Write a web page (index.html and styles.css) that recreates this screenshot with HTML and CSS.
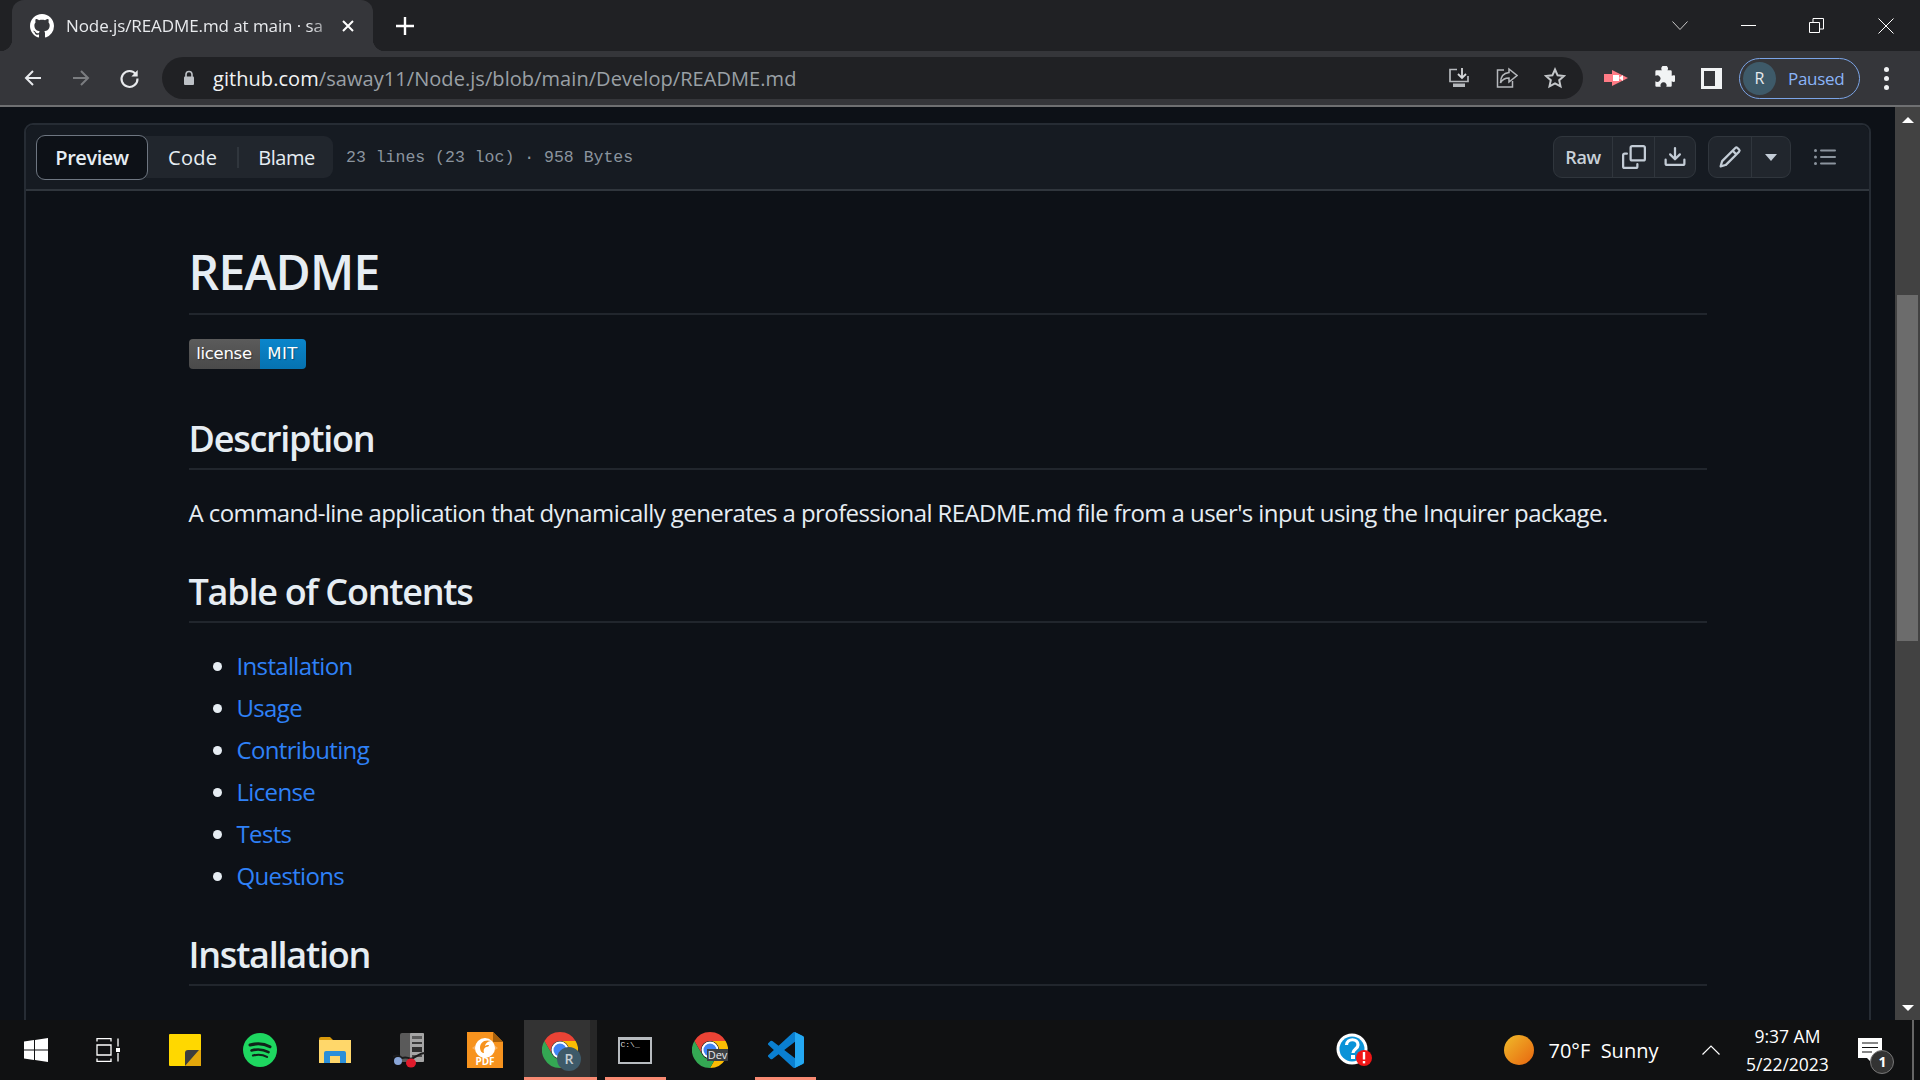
FILE: index.html
```html
<!DOCTYPE html>
<html lang="en">
<head>
  <meta charset="UTF-8" />
  <title>Node.js/README.md at main</title>
  <link rel="stylesheet" href="styles.css">
</head>
<body>

<div class="tabstrip">
  <div class="tab">
    <svg class="tab-logo" viewBox="0 0 16 16"><path fill="#fff" d="M8 0C3.58 0 0 3.58 0 8c0 3.54 2.29 6.53 5.47 7.59.4.07.55-.17.55-.38 0-.19-.01-.82-.01-1.49-2.01.37-2.53-.49-2.69-.94-.09-.23-.48-.94-.82-1.13-.28-.15-.68-.52-.01-.53.63-.01 1.08.58 1.23.82.72 1.21 1.87.87 2.33.66.07-.52.28-.87.51-1.07-1.78-.2-3.64-.89-3.64-3.95 0-.87.31-1.59.82-2.15-.08-.2-.36-1.02.08-2.12 0 0 .67-.21 2.2.82.64-.18 1.32-.27 2-.27s1.36.09 2 .27c1.53-1.04 2.2-.82 2.2-.82.44 1.1.16 1.92.08 2.12.51.56.82 1.27.82 2.15 0 3.07-1.87 3.75-3.65 3.95.29.25.54.73.54 1.48 0 1.07-.01 1.93-.01 2.2 0 .21.15.46.55.38A8.01 8.01 0 0 0 16 8c0-4.42-3.58-8-8-8z"/></svg>
    <span class="tab-title">Node.js/README.md at main · sa</span>
    <svg class="tab-close" viewBox="0 0 12 12"><path d="M1 1l10 10M11 1L1 11" stroke="#fff" stroke-width="2"/></svg>
  </div>
  <svg class="new-tab" viewBox="0 0 18 18"><path d="M9 0v18M0 9h18" stroke="#fff" stroke-width="2.4"/></svg>
  <div class="window-btns">
    <svg class="win-chevron" viewBox="0 0 16 10"><path d="M.5.5L8 8.5 15.5.5" fill="none" stroke="#c8c8c8"/></svg>
    <svg class="win-min" viewBox="0 0 15 1"><path d="M0 .5h15" stroke="#fff"/></svg>
    <svg class="win-restore" viewBox="0 0 15 15"><path d="M.5 4.5h10v10H.5zM4 4V.5h10.5V11H11" fill="none" stroke="#fff"/></svg>
    <svg class="win-close" viewBox="0 0 16 16"><path d="M.5.5l15 15M15.5.5l-15 15" stroke="#fff"/></svg>
  </div>
</div>

<div class="toolbar">
  <svg class="nav-icon" viewBox="0 0 20 20"><path d="M18 10H3M10 3l-7 7 7 7" fill="none" stroke="#e8eaed" stroke-width="2"/></svg>
  <svg class="nav-icon nav-forward" viewBox="0 0 20 20"><path d="M2 10h15M10 3l7 7-7 7" fill="none" stroke="#7b7d80" stroke-width="2"/></svg>
  <svg class="nav-icon nav-reload" viewBox="0 0 20 20"><path d="M16.2 6A7.6 7.6 0 1 0 17.6 10" fill="none" stroke="#e8eaed" stroke-width="2"/><path d="M17.8 2v6h-6z" fill="#e8eaed"/></svg>
  <div class="omnibox">
    <svg class="lock" viewBox="0 0 12 16"><path d="M3 7V4.500a3 3 0 0 1 6 0V7" fill="none" stroke="#bdc1c6" stroke-width="1.600"/><rect x="1" y="6.500" width="10" height="8.500" rx="1" fill="#bdc1c6"/></svg>
    <span class="url"><b>github.com</b>/saway11/Node.js/blob/main/Develop/README.md</span>
    <svg class="omni-icon omni-install" viewBox="0 0 22 22"><path d="M9 2.500H2v12h18V9" fill="none" stroke="#b5b8bc" stroke-width="1.700"/><path d="M14 1v9M10 7l4 4 4-4" fill="none" stroke="#d5d7da" stroke-width="1.800"/><rect x="5" y="16.500" width="12" height="3.500" fill="#b5b8bc"/></svg>
    <svg class="omni-icon omni-share" viewBox="0 0 22 22"><path d="M8 3H1.500v17h15v-6" fill="none" stroke="#b5b8bc" stroke-width="1.500"/><path d="M13 2l8 6.500-8 6.500v-4c-4 0-6.500 1-8.500 5 0-6 3-10 8.500-10.500z" fill="none" stroke="#b5b8bc" stroke-width="1.500"/></svg>
    <svg class="omni-icon omni-star" viewBox="0 0 22 22"><path d="M11 2.500l2.600 5.800 6.300.7-4.700 4.200 1.300 6.200L11 16.300l-5.500 3.100 1.300-6.200L2.100 9l6.300-.7z" fill="none" stroke="#c4c7ca" stroke-width="2"/></svg>
  </div>
  <svg class="ext-icon ext-rec" viewBox="0 0 24 16"><path d="M0 4h8V0l16 8-16 8v-4H0z" fill="#ff7b85"/><rect x="9" y="5" width="6" height="6" fill="#fff"/><path d="M15 8l4-3v6z" fill="#fff"/></svg>
  <svg class="ext-icon ext-puzzle" viewBox="0 0 22 22"><path fill="#f1f3f4" d="M7 4h3a3 3 0 1 1 5 0h3a1 1 0 0 1 1 1v4a3 3 0 1 1 0 5v4a1 1 0 0 1-1 1h-4a2.800 2.800 0 1 0-5 0H5a1 1 0 0 1-1-1v-4a3 3 0 1 0 0-5V5a1 1 0 0 1 1-1z"/></svg>
  <svg class="ext-icon ext-panel" viewBox="0 0 21 21"><rect width="21" height="21" fill="#f1f3f4"/><rect x="3" y="3" width="11" height="15" fill="#35363a"/></svg>
  <div class="profile">
    <span class="avatar">R</span>
    <span class="paused">Paused</span>
  </div>
  <div class="kebab"><i></i><i></i><i></i></div>
</div>
<div class="toolbar-line"></div>

<div class="viewport">
  <div class="page">
    <div class="card">
      <div class="card-head">
        <div class="segments">
          <span class="seg seg-active">Preview</span>
          <span class="seg seg-code">Code</span>
          <span class="seg-divider"></span>
          <span class="seg seg-blame">Blame</span>
        </div>
        <span class="file-meta">23 lines (23 loc) · 958 Bytes</span>
        <div class="head-actions">
          <div class="btn-group">
            <span class="gh-btn gh-raw">Raw</span>
            <span class="gh-btn gh-copy">
              <svg width="24" height="24" viewBox="0 0 16 16"><path fill="#c3ccd6" d="M0 6.750C0 5.784.784 5 1.750 5h1.500a.75.750 0 0 1 0 1.500h-1.500a.25.250 0 0 0-.25.25v7.500c0 .138.112.25.25.25h7.500a.25.250 0 0 0 .25-.25v-1.500a.75.750 0 0 1 1.500 0v1.500A1.750 1.750 0 0 1 9.250 16h-7.500A1.750 1.750 0 0 1 0 14.250Z"/><path fill="#c3ccd6" d="M5 1.750C5 .784 5.784 0 6.750 0h7.500C15.216 0 16 .784 16 1.750v7.500A1.750 1.750 0 0 1 14.250 11h-7.500A1.750 1.750 0 0 1 5 9.250Zm1.750-.25a.25.250 0 0 0-.25.25v7.500c0 .138.112.25.25.25h7.500a.25.250 0 0 0 .25-.25v-7.500a.25.250 0 0 0-.25-.25Z"/></svg>
            </span>
            <span class="gh-btn gh-download">
              <svg width="24" height="24" viewBox="0 0 16 16"><path fill="#c3ccd6" d="M2.750 14A1.750 1.750 0 0 1 1 12.250v-2.500a.75.750 0 0 1 1.500 0v2.500c0 .138.112.25.25.25h10.500a.25.250 0 0 0 .25-.25v-2.500a.75.750 0 0 1 1.500 0v2.500A1.750 1.750 0 0 1 13.250 14Z"/><path fill="#c3ccd6" d="M7.250 7.689V2a.75.750 0 0 1 1.500 0v5.689l1.970-1.969a.749.749 0 1 1 1.060 1.060l-3.250 3.250a.749.749 0 0 1-1.060 0L4.220 6.780a.749.749 0 1 1 1.060-1.060l1.970 1.969Z"/></svg>
            </span>
          </div>
          <div class="btn-group edit-group">
            <span class="gh-btn gh-pencil">
              <svg width="24" height="24" viewBox="0 0 16 16"><path fill="#c3ccd6" d="M11.013 1.427a1.750 1.750 0 0 1 2.474 0l1.086 1.086a1.750 1.750 0 0 1 0 2.474l-8.610 8.610c-.210.210-.470.364-.756.445l-3.251.930a.75.750 0 0 1-.927-.927l.929-3.250c.081-.286.235-.547.445-.758l8.610-8.610Zm.176 4.823L9.750 4.810l-6.286 6.287a.253.253 0 0 0-.064.108l-.558 1.953 1.953-.558a.253.253 0 0 0 .108-.064Zm1.238-3.763a.25.250 0 0 0-.354 0L10.811 3.750l1.439 1.440 1.263-1.263a.25.250 0 0 0 0-.354Z"/></svg>
            </span>
            <span class="gh-btn gh-caret">
              <svg width="12" height="7" viewBox="0 0 12 7"><path fill="#c3ccd6" d="M0 0h12L6 7z"/></svg>
            </span>
          </div>
          <svg class="list-icon" viewBox="0 0 22 16"><g fill="#8b949e"><circle cx="1.500" cy="1.500" r="1.500"/><circle cx="1.500" cy="8" r="1.500"/><circle cx="1.500" cy="14.500" r="1.500"/><rect x="6" y="0.500" width="16" height="2" rx="1"/><rect x="6" y="7" width="16" height="2" rx="1"/><rect x="6" y="13.500" width="16" height="2" rx="1"/></g></svg>
        </div>
      </div>
      <article class="markdown">
        <h1>README</h1>
        <p class="badge-row"><span class="badge"><span class="badge-l">license</span><span class="badge-r">MIT</span></span></p>
        <h2>Description</h2>
        <p class="intro">A command-line application that dynamically generates a professional README.md file from a user's input using the Inquirer package.</p>
        <h2>Table of Contents</h2>
        <ul>
          <li><a href="#">Installation</a></li>
          <li><a href="#">Usage</a></li>
          <li><a href="#">Contributing</a></li>
          <li><a href="#">License</a></li>
          <li><a href="#">Tests</a></li>
          <li><a href="#">Questions</a></li>
        </ul>
        <h2>Installation</h2>
      </article>
    </div>
  </div>
  <div class="scrollbar">
    <div class="scroll-btn"><svg width="12" height="6" viewBox="0 0 12 6"><path fill="#fff" d="M6 0l6 6H0z"/></svg></div>
    <div class="scroll-track"><div class="scroll-thumb"></div></div>
    <div class="scroll-btn"><svg width="12" height="6" viewBox="0 0 12 6"><path fill="#fff" d="M6 6L0 0h12z"/></svg></div>
  </div>
</div>

<div class="taskbar">
  <svg class="tb tb-win" viewBox="0 0 24 24"><path fill="#fff" d="M0 3.500l10-1.400v9.300H0zM11 2l13-2v11.400H11zM0 12.500h10v9.400L0 20.500zM11 12.500h13V24l-13-1.900z"/></svg>
  <svg class="tb tb-view" viewBox="0 0 24 24"><g fill="none" stroke="#fff" stroke-width="1.300"><path d="M1 3.500V.700h14v2.800M1 20.500v2.800h14v-2.800M1 7h14v10H1zM22 .500v8M22 15v8.500"/></g><rect x="20" y="10" width="4" height="4" fill="#fff"/></svg>
  <svg class="tb tb-note" viewBox="0 0 32 32"><path fill="#ffd800" d="M0 1a1 1 0 0 1 1-1h30a1 1 0 0 1 1 1v30a1 1 0 0 1-1 1H1a1 1 0 0 1-1-1z"/><path fill="#e3a70b" d="M16 32L30 16h2v15a1 1 0 0 1-1 1z"/><path fill="#3d3d3d" d="M16 32V19a3 3 0 0 1 3-3h11z"/></svg>
  <svg class="tb tb-spotify" viewBox="0 0 34 34"><circle cx="17" cy="17" r="17" fill="#1ed760"/><g fill="none" stroke="#10231a" stroke-linecap="round"><path d="M7 12c7-2 14-1.500 20 1.700" stroke-width="3"/><path d="M8.500 17.500c6-1.700 12-1 17 1.700" stroke-width="2.600"/><path d="M10 22.500c5-1.300 10-.8 14 1.400" stroke-width="2.200"/></g></svg>
  <svg class="tb tb-folder" viewBox="0 0 32 26"><path fill="#d99a0c" d="M0 2a2 2 0 0 1 2-2h9l4 4H0z"/><path fill="#ffd76a" d="M0 3h32v23H0z"/><path fill="#2b8fd9" d="M5 26V16a2 2 0 0 1 2-2h18a2 2 0 0 1 2 2v10h-6v-7H11v7z"/></svg>
  <svg class="tb tb-tower" viewBox="0 0 32 36"><rect x="7" y="1" width="24" height="29" rx="2" fill="#5a5a5a"/><rect x="17" y="1" width="14" height="29" rx="1" fill="#a5a5a5"/><rect x="19" y="4" width="10" height="3" fill="#5c5c5c"/><rect x="19" y="10" width="10" height="2" fill="#3a3a3a"/><rect x="19" y="15" width="10" height="5" fill="#2f2f2f"/><rect x="19" y="23" width="10" height="2" fill="#4a4a4a"/><path d="M0 25c4-3 7-1 9 1 3-1 7 0 9 1 5-2 9-6 14-6" fill="none" stroke="#1c1c1c" stroke-width="2"/><ellipse cx="5" cy="29" rx="4" ry="4" fill="#8aa6d8"/><ellipse cx="18" cy="31" rx="5" ry="4.500" fill="#e01b2c"/></svg>
  <div class="tb tb-pdf">
    <svg viewBox="0 0 36 36" class="tb-pdf-mark"><path d="M0 0h26l10 10v26H0z" fill="#f7931e"/><path d="M26 0l10 10H26z" fill="#a8600b"/><path d="M18 25L5 16l13-10 13 10z" fill="#fab160"/><circle cx="18" cy="16" r="10" fill="#fff"/><path d="M24 9c-7-2-11 2-11 7 0 3 2 5 4 5-1-3 0-5 2-6 2 0 3-1 3-2-2 0-3 0-4 1 0-2 3-5 6-5z" fill="#f7931e"/></svg>
    <span class="tb-pdf-label">PDF</span>
  </div>
  <div class="tb-task tb-chrome-r">
    <svg class="chrome-icon" viewBox="0 0 36 36"><use href="#chrome"/></svg>
    <span class="chrome-badge">R</span>
  </div>
  <div class="tb-task tb-cmd">
    <div class="cmd-window"><span class="cmd-text">C:\_</span></div>
  </div>
  <div class="tb-dev">
    <svg class="chrome-icon" viewBox="0 0 36 36"><use href="#chrome"/></svg>
    <span class="dev-badge">Dev</span>
  </div>
  <div class="tb-task tb-vscode">
    <svg viewBox="0 0 24 24" class="vscode-icon"><path fill="#0a7fd0" d="M23.150 2.587L18.210.21a1.494 1.494 0 0 0-1.705.29l-9.460 8.630-4.120-3.128a.999.999 0 0 0-1.276.057L.327 7.261A1 1 0 0 0 .326 8.740L3.899 12 .326 15.260a1 1 0 0 0 .001 1.479L1.650 17.940a.999.999 0 0 0 1.276.057l4.120-3.128 9.460 8.630a1.492 1.492 0 0 0 1.704.29l4.942-2.377A1.500 1.500 0 0 0 24 20.060V3.939a1.500 1.500 0 0 0-.850-1.352zm-5.146 14.861L10.826 12l7.178-5.448v10.896z"/><path fill="#24a8f2" d="M18.004.1l5.146 2.487A1.500 1.500 0 0 1 24 3.940v16.120a1.500 1.500 0 0 1-.850 1.353L18.004 23.900z"/></svg>
  </div>

  <svg class="tray-help" viewBox="0 0 36 34"><circle cx="16" cy="16" r="15.500" fill="#fff"/><circle cx="16" cy="16" r="12.500" fill="#0a93d8"/><path d="M10.500 12c.5-7 11.500-7 11.500 0 0 4-5 4-5 8" fill="none" stroke="#fff" stroke-width="3.200"/><rect x="15" y="22" width="4" height="4" fill="#fff"/><circle cx="28" cy="25" r="8" fill="#f01616"/><rect x="26.800" y="19" width="2.400" height="7.500" fill="#fff"/><rect x="26.800" y="28" width="2.400" height="2.400" fill="#fff"/></svg>
  <div class="weather">
    <span class="sun"></span>
    <span class="weather-text">70°F&nbsp; Sunny</span>
  </div>
  <svg class="tray-chevron" viewBox="0 0 18 10"><path d="M.5 9.500L9 1l8.500 8.500" fill="none" stroke="#fff" stroke-width="1.200"/></svg>
  <div class="clock">
    <span>9:37 AM</span>
    <span>5/22/2023</span>
  </div>
  <div class="notif">
    <svg viewBox="0 0 24 26"><path fill="#fff" d="M0 0h24v20H15v6l-6-6H0z"/><path d="M4 5h16M4 9.500h16M4 14h10" stroke="#111" stroke-width="1.200"/></svg>
    <span class="notif-count">1</span>
  </div>
  <div class="tb-edge"></div>
</div>

<svg class="defs" width="0" height="0">
  <defs>
    <g id="chrome">
      <path fill="#ea4335" d="M18 0A18 18 0 0 1 33.590 9H18a9 9 0 0 0-7.800 13.500L2.410 9A18 18 0 0 1 18 0z"/>
      <path fill="#fbbc04" d="M33.590 9A18 18 0 0 1 18 36l7.800-13.500A9 9 0 0 0 18 9z"/>
      <path fill="#34a853" d="M2.410 9A18 18 0 0 0 18 36l7.800-13.500a9 9 0 0 1-15.600 0z"/>
      <circle cx="18" cy="18" r="8.500" fill="#fff"/>
      <circle cx="18" cy="18" r="6.500" fill="#4285f4"/>
    </g>
  </defs>
</svg>

</body>
</html>
```

FILE: styles.css
```css
* {
  box-sizing: border-box;
}
html, body {
  margin: 0;
  padding: 0;
}
body {
  width: 1920px;
  height: 1080px;
  overflow: hidden;
  display: flex;
  flex-direction: column;
  background: #0d1117;
  font-family: "Open Sans", "Noto Sans", sans-serif;
}

/* browser chrome */
.tabstrip {
  height: 51px;
  flex: none;
  display: flex;
  align-items: flex-end;
  background: #202124;
  padding-left: 12px;
}
.tab {
  width: 361px;
  height: 51px;
  background: #35363a;
  border-radius: 12px 12px 0 0;
  display: flex;
  align-items: center;
  padding: 0 19px 0 18px;
  position: relative;
}
.tab::before,
.tab::after {
  content: "";
  position: absolute;
  bottom: 0;
  width: 12px;
  height: 12px;
}
.tab::before {
  left: -12px;
  background: radial-gradient(circle at 0 0, transparent 12px, #35363a 12.500px);
}
.tab::after {
  right: -12px;
  background: radial-gradient(circle at 100% 0, transparent 12px, #35363a 12.500px);
}
.tab-logo {
  width: 24px;
  height: 24px;
  flex: none;
}
.tab-title {
  flex: 1;
  margin-left: 12px;
  font-size: 17px;
  letter-spacing: -0.09px;
  color: #e8eaed;
  white-space: nowrap;
  -webkit-mask-image: linear-gradient(to right, #000 88%, transparent 100%);
  mask-image: linear-gradient(to right, #000 88%, transparent 100%);
}
.tab-close {
  width: 12px;
  height: 12px;
  flex: none;
}
.new-tab {
  width: 18px;
  height: 18px;
  align-self: center;
  margin-left: 23px;
}
.window-btns {
  margin-left: auto;
  align-self: stretch;
  display: flex;
  align-items: center;
}
.win-chevron {
  width: 16px;
  height: 10px;
  margin-right: 53px;
}
.win-min {
  width: 15px;
  height: 1px;
  margin-right: 53px;
}
.win-restore {
  width: 15px;
  height: 15px;
  margin-right: 54px;
}
.win-close {
  width: 16px;
  height: 16px;
  margin-right: 26px;
}

.toolbar {
  height: 54px;
  flex: none;
  display: flex;
  align-items: center;
  background: #35363a;
  padding-left: 23px;
}
.toolbar-line {
  height: 2px;
  flex: none;
  background: #6f7072;
}
.nav-icon {
  width: 20px;
  height: 20px;
  flex: none;
}
.nav-forward {
  margin-left: 28px;
}
.nav-reload {
  margin-left: 28px;
  width: 21px;
  height: 21px;
}
.omnibox {
  width: 1421px;
  height: 42px;
  margin-left: 22px;
  border-radius: 21px;
  background: #202124;
  display: flex;
  align-items: center;
  padding-left: 21px;
}
.lock {
  width: 12px;
  height: 16px;
  flex: none;
}
.url {
  margin-left: 18px;
  font-size: 20px;
  letter-spacing: 0.06px;
  color: #9aa0a6;
  white-space: nowrap;
}
.url b {
  font-weight: 400;
  color: #f1f3f4;
}
.omni-icon {
  width: 22px;
  height: 22px;
  flex: none;
}
.omni-install {
  margin-left: auto;
}
.omni-share {
  margin-left: 26px;
}
.omni-star {
  margin-left: 26px;
  margin-right: 17px;
}
.ext-icon {
  flex: none;
}
.ext-rec {
  width: 24px;
  height: 16px;
  margin-left: 21px;
}
.ext-puzzle {
  width: 24px;
  height: 24px;
  margin-left: 23px;
}
.ext-panel {
  width: 21px;
  height: 21px;
  margin-left: 26px;
}
.profile {
  width: 121px;
  height: 41px;
  margin-left: 17px;
  border: 1.500px solid #7ba4e6;
  border-radius: 21px;
  display: flex;
  align-items: center;
  padding-left: 3px;
  flex: none;
}
.avatar {
  width: 33px;
  height: 33px;
  border-radius: 50%;
  background: #3e5a69;
  color: #e8eaed;
  font-size: 16px;
  display: flex;
  align-items: center;
  justify-content: center;
}
.paused {
  margin-left: 12px;
  font-size: 17px;
  letter-spacing: -0.3px;
  color: #8ab4f8;
}
.kebab {
  margin-left: 24px;
  display: flex;
  flex-direction: column;
  gap: 4px;
}
.kebab i {
  display: block;
  width: 5px;
  height: 5px;
  border-radius: 50%;
  background: #f1f3f4;
}

/* page area */
.viewport {
  flex: 1;
  min-height: 0;
  display: flex;
}
.page {
  flex: 1;
  padding: 16px 24px 0 24px;
  overflow: hidden;
}
.card {
  height: 100%;
  min-height: 1000px;
  border: 2px solid #262c34;
  border-radius: 9px 9px 0 0;
}
.card-head {
  height: 66px;
  background: #161b22;
  border-bottom: 2px solid #30363d;
  border-radius: 8px 8px 0 0;
  display: flex;
  align-items: center;
  padding-left: 10px;
}
.segments {
  height: 42px;
  width: 297px;
  background: #21262d;
  border-radius: 9px;
  display: flex;
  align-items: center;
  font-size: 20px;
  color: #e6edf3;
  flex: none;
}
.seg {
  display: flex;
  align-items: center;
  letter-spacing: -0.45px;
}
.seg-active {
  width: 112px;
  height: 45px;
  justify-content: center;
  background: #0d1117;
  border: 1.500px solid #6e7681;
  border-radius: 9px;
  font-weight: 600;
}
.seg-code {
  margin-left: 20px;
  letter-spacing: 0.3px;
}
.seg-divider {
  width: 2px;
  height: 21px;
  background: #30363d;
  margin-left: 20px;
}
.seg-blame {
  margin-left: 19px;
}
.file-meta {
  margin-left: 13px;
  font-family: "Liberation Mono", monospace;
  font-size: 16.500px;
  color: #8b949e;
  white-space: nowrap;
}
.head-actions {
  margin-left: auto;
  display: flex;
  align-items: center;
  margin-right: 33px;
}
.btn-group {
  height: 42px;
  display: flex;
  background: #21262d;
  border: 1.500px solid #30363d;
  border-radius: 9px;
}
.gh-btn {
  display: flex;
  align-items: center;
  justify-content: center;
  border-left: 1.500px solid #30363d;
}
.gh-btn:first-child {
  border-left: 0;
}
.gh-raw {
  width: 58px;
  font-size: 18px;
  font-weight: 600;
  letter-spacing: -0.4px;
  color: #c9d1d9;
}
.gh-copy {
  width: 42px;
}
.gh-download {
  width: 41px;
}
.gh-pencil {
  width: 42px;
}
.gh-caret {
  width: 39px;
}
.edit-group {
  margin-left: 12px;
}
.list-icon {
  width: 22px;
  height: 16px;
  margin-left: 23px;
}

/* readme */
.markdown {
  padding: 51px 162px 0 162.500px;
  color: #e6edf3;
  font-size: 24px;
  line-height: 36px;
  letter-spacing: -0.66px;
}
.markdown h1 {
  margin: 0 0 24px;
  height: 73px;
  font-size: 48px;
  line-height: 60px;
  font-weight: 600;
  letter-spacing: -0.7px;
  border-bottom: 2px solid #21262d;
}
.markdown h2 {
  margin: 34px 0 25px;
  height: 58px;
  font-size: 36px;
  line-height: 54px;
  font-weight: 600;
  letter-spacing: -1.25px;
  border-bottom: 2px solid #21262d;
}
.markdown p {
  margin: 0 0 24px;
}
.markdown p.intro {
  letter-spacing: -0.585px;
}
.markdown p.badge-row {
  margin: 0 0 43px;
  height: 30px;
  display: flex;
}
.badge {
  display: flex;
  height: 30px;
  width: 117px;
  border-radius: 4px;
  overflow: hidden;
  font-family: "DejaVu Sans", sans-serif;
  font-size: 16.500px;
  letter-spacing: -0.3px;
  line-height: 30px;
  color: #fff;
  text-shadow: 1px 1px 1px rgba(0, 0, 0, 0.35);
}
.badge-l {
  width: 71px;
  text-align: center;
  background: linear-gradient(#5b5b5b, #4a4a4a);
}
.badge-r {
  flex: 1;
  text-align: center;
  letter-spacing: 0.4px;
  background: linear-gradient(#0a86cc, #0672b0);
}
.markdown ul {
  margin: 0 0 24px;
  padding-left: 48px;
}
.markdown li {
  margin-bottom: 6px;
}
.markdown a {
  color: #2f81f7;
  text-decoration: none;
}

/* scrollbar */
.scrollbar {
  width: 25px;
  flex: none;
  display: flex;
  flex-direction: column;
  background: #424242;
}
.scroll-btn {
  height: 25px;
  flex: none;
  display: flex;
  align-items: center;
  justify-content: center;
}
.scroll-track {
  flex: 1;
  padding: 163px 2px 0;
}
.scroll-thumb {
  height: 346px;
  background: #6c6c6c;
}

/* windows taskbar */
.taskbar {
  height: 60px;
  flex: none;
  background: #101112;
  display: flex;
  align-items: center;
  color: #fff;
}
.tb {
  flex: none;
}
.tb-win {
  width: 24px;
  height: 24px;
  margin-left: 24px;
}
.tb-view {
  width: 24px;
  height: 24px;
  margin-left: 48px;
}
.tb-note {
  width: 32px;
  height: 32px;
  margin-left: 49px;
}
.tb-spotify {
  width: 34px;
  height: 34px;
  margin-left: 42px;
}
.tb-folder {
  width: 32px;
  height: 26px;
  margin-left: 42px;
}
.tb-tower {
  width: 32px;
  height: 36px;
  margin-left: 42px;
}
.tb-pdf {
  width: 36px;
  height: 36px;
  margin-left: 42px;
  position: relative;
}
.tb-pdf-mark {
  width: 36px;
  height: 36px;
  display: block;
}
.tb-pdf-label {
  position: absolute;
  left: 0;
  right: 0;
  bottom: 2px;
  text-align: center;
  font-size: 10px;
  font-weight: 700;
  line-height: 10px;
  color: #fff;
}
.tb-task {
  height: 60px;
  flex: none;
  display: flex;
  align-items: center;
  justify-content: center;
  border-bottom: 3px solid #f88a72;
  position: relative;
  padding-top: 3px;
}
.tb-chrome-r {
  width: 73px;
  margin-left: 21px;
  background: #333;
  padding-right: 2px;
  box-shadow: inset -7px 0 0 #272727;
}
.chrome-icon {
  width: 36px;
  height: 36px;
  display: block;
}
.chrome-badge {
  position: absolute;
  left: 33px;
  top: 27px;
  width: 24px;
  height: 24px;
  border-radius: 50%;
  background: #3e5a69;
  font-size: 14px;
  font-weight: 600;
  line-height: 24px;
  text-align: center;
  color: #c5ced3;
}
.tb-cmd {
  width: 61px;
  margin-left: 8px;
  padding-right: 2px;
}
.cmd-window {
  width: 34px;
  height: 27px;
  border: 2px solid #b8bcc0;
  border-top-width: 3px;
  background: #000;
  padding: 1px;
}
.cmd-text {
  display: block;
  font-family: "Liberation Mono", monospace;
  font-size: 8px;
  line-height: 8px;
  color: #ddd;
}
.tb-dev {
  width: 36px;
  height: 36px;
  margin-left: 26px;
  flex: none;
  position: relative;
}
.dev-badge {
  position: absolute;
  right: 0;
  bottom: 7px;
  width: 21px;
  height: 12px;
  background: #3c4043;
  font-size: 11px;
  line-height: 12px;
  text-align: center;
  color: #e8eaed;
}
.tb-vscode {
  width: 61px;
  margin-left: 27px;
}
.vscode-icon {
  width: 36px;
  height: 36px;
  display: block;
}
.tray-help {
  width: 36px;
  height: 34px;
  margin-left: 519.500px;
  flex: none;
}
.weather {
  display: flex;
  align-items: center;
  margin-left: 132px;
}
.sun {
  width: 30px;
  height: 30px;
  border-radius: 50%;
  background: linear-gradient(135deg, #f0bb2a, #e8650f);
}
.weather-text {
  margin-left: 15px;
  font-size: 20px;
  letter-spacing: 0;
  white-space: nowrap;
}
.tray-chevron {
  width: 18px;
  height: 10px;
  margin-left: 44px;
  flex: none;
}
.clock {
  width: 110px;
  margin-left: 12px;
  display: flex;
  flex-direction: column;
  align-items: center;
  font-size: 17.500px;
  line-height: 28px;
  white-space: nowrap;
}
.notif {
  width: 24px;
  height: 36px;
  margin-left: 16px;
  position: relative;
  flex: none;
}
.notif svg {
  display: block;
  width: 24px;
  height: 26px;
  margin-top: 6px;
}
.notif-count {
  position: absolute;
  left: 12px;
  top: 18px;
  width: 24px;
  height: 24px;
  border-radius: 50%;
  background: #333;
  border: 1px solid #777;
  font-size: 14px;
  font-weight: 700;
  line-height: 22px;
  text-align: center;
}
.tb-edge {
  width: 2px;
  align-self: stretch;
  margin-left: 30px;
  background: #666;
  flex: none;
}
.defs {
  position: absolute;
}
```
